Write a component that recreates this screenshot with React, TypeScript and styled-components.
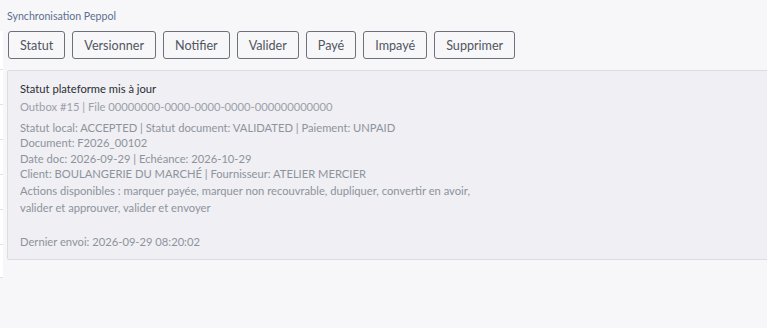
import React from "react";
import styled, { createGlobalStyle } from "styled-components";

const Global = createGlobalStyle`
  html, body { margin: 0; padding: 0; background: #f7f7f9; }
  body { font-family: Lato, "Open Sans", sans-serif; width: 767px; height: 328px; overflow: hidden; }
`;

const Page = styled.div`
  display: flex;
  align-items: flex-start;
  height: 328px;
`;

const Strip = styled.div`
  width: 3px;
  margin-top: 31px;
  background: #ffffff;
  display: flex;
  flex-direction: column;
`;

const StripRow = styled.div<{ $h: number }>`
  height: ${(p) => p.$h}px;
  border-bottom: 1px solid #e2e2e6;
  box-sizing: border-box;
`;

const Main = styled.div`
  flex: 1;
  padding: 9px 0 0 4px;
  min-width: 0;
`;

const Heading = styled.div`
  font-size: 10.6px;
  line-height: 14px;
  color: #5b6f8e;
`;

const Toolbar = styled.div`
  display: flex;
  gap: 7px;
  margin-top: 8px;
  padding-left: 1px;
`;

const Button = styled.button`
  font-family: inherit;
  height: 28px;
  padding: 0 11px;
  border: 1px solid #6b7079;
  border-radius: 3px;
  background: #f7f7f9;
  color: #50565f;
  font-size: 12.6px;
  cursor: pointer;
`;

const Panel = styled.div`
  margin-top: 11px;
  margin-right: -6px;
  background: #efeff4;
  border: 1px solid #dcdce3;
  border-radius: 2px;
  padding: 10px 12px 12px;
  height: 190px;
  box-sizing: border-box;
`;

const Title = styled.div`
  font-size: 11.2px;
  line-height: 16px;
  color: #2a2d33;
`;

const Sub = styled.div`
  font-size: 11.2px;
  line-height: 16px;
  color: #9ca0a8;
  margin-top: 2px;
`;

const Group = styled.div<{ $mt: number; $lh: number }>`
  margin-top: ${(p) => p.$mt}px;
  font-size: 11.2px;
  line-height: ${(p) => p.$lh}px;
  color: #8e939b;
  white-space: pre-line;
`;

const buttons = ["Statut", "Versionner", "Notifier", "Valider", "Payé", "Impayé", "Supprimer"];

export default function App() {
  return (
    <>
      <Global />
      <Page>
        <Strip>
          {[39, 35, 35, 35, 35, 35, 33].map((h, i) => (
            <StripRow key={i} $h={h} />
          ))}
        </Strip>
        <Main>
          <Heading>Synchronisation Peppol</Heading>
          <Toolbar>
            {buttons.map((b) => (
              <Button key={b}>{b}</Button>
            ))}
          </Toolbar>
          <Panel>
            <Title>Statut plateforme mis à jour</Title>
            <Sub>Outbox #15 | File 00000000-0000-0000-0000-000000000000</Sub>
            <Group $mt={5} $lh={15}>
              {"Statut local: ACCEPTED | Statut document: VALIDATED | Paiement: UNPAID\nDocument: F2026_00102"}
            </Group>
            <Group $mt={1} $lh={15}>
              {"Date doc: 2026-09-29 | Echéance: 2026-10-29\nClient: BOULANGERIE DU MARCHÉ | Fournisseur: ATELIER MERCIER"}
            </Group>
            <Group $mt={1} $lh={17}>
              {"Actions disponibles : marquer payée, marquer non recouvrable, dupliquer, convertir en avoir,\nvalider et approuver, valider et envoyer\n\nDernier envoi: 2026-09-29 08:20:02"}
            </Group>
          </Panel>
        </Main>
      </Page>
    </>
  );
}
